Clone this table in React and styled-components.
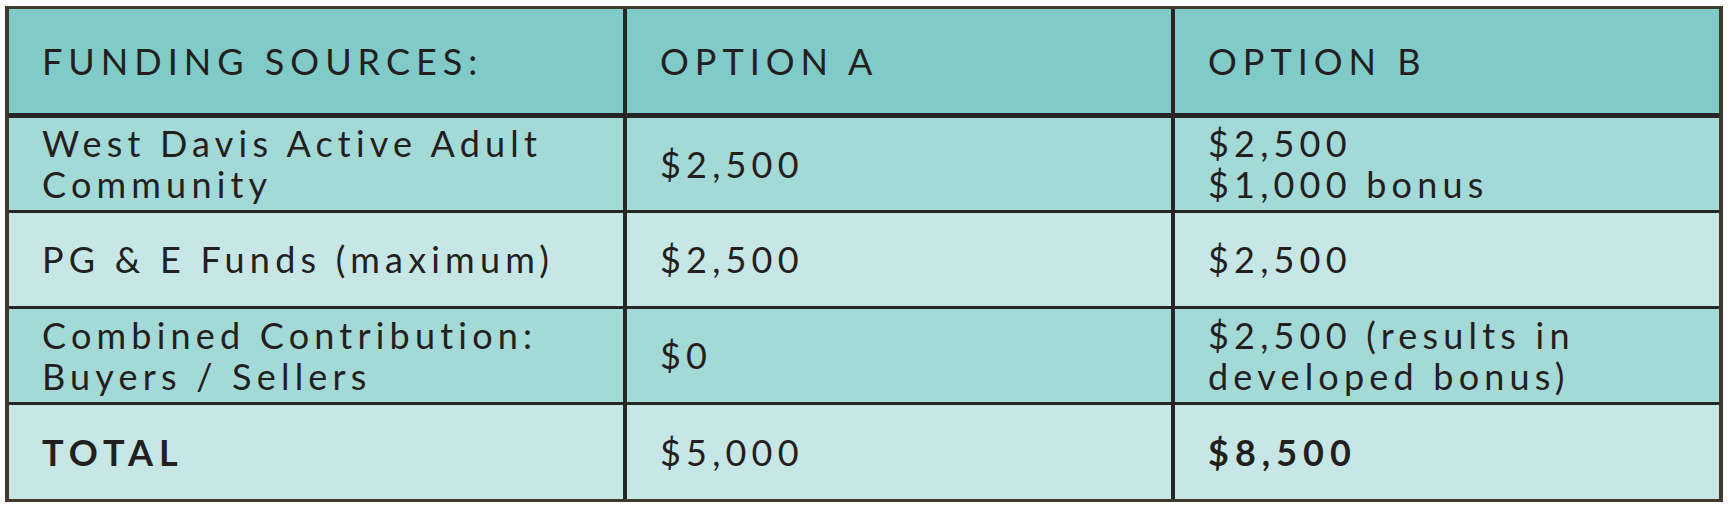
import * as React from 'react'
import styled, { createGlobalStyle } from 'styled-components'

const GlobalStyle = createGlobalStyle`
  html, body {
    margin: 0;
    padding: 0;
    background: #ffffff;
  }
  body {
    font-family: 'Lato', 'Liberation Sans', sans-serif;
    color: #231f20;
  }
`

const Frame = styled.div`
  margin: 6px 0 0 5px;
  width: max-content;
  display: grid;
  grid-template-columns: 614px 544px 544px;
  grid-template-rows: 106px 92px 93px 93px 94px;
  column-gap: 4px;
  row-gap: 3px;
  background: #262626;
  border-style: solid;
  border-color: #3e3b2d;
  border-width: 3px 4px 3px 4px;
`

const shades = {
  head: '#80cac7',
  dark: '#a3d9d7',
  light: '#c6e7e6',
}

const Cell = styled.div`
  display: flex;
  flex-direction: column;
  justify-content: center;
  padding: 0 10px 0 33px;
  background: ${(p) => shades[p.$tone]};
  font-size: 36px;
  line-height: 41px;
  letter-spacing: ${(p) => (p.$bold ? '6px' : '5.2px')};
  font-weight: ${(p) => (p.$bold ? 700 : 400)};
  white-space: nowrap;
  ${(p) =>
    p.$tone === 'head' &&
    `
    border-bottom: 2px solid #262626;
    text-transform: uppercase;
    letter-spacing: 6px;
  `}
`

const rows = [
  { tone: 'dark', cells: [['West Davis Active Adult', 'Community'], ['$2,500'], ['$2,500', '$1,000 bonus']] },
  { tone: 'light', cells: [['PG & E Funds (maximum)'], ['$2,500'], ['$2,500']] },
  { tone: 'dark', cells: [['Combined Contribution:', 'Buyers / Sellers'], ['$0'], ['$2,500 (results in', 'developed bonus)']] },
  { tone: 'light', cells: [['TOTAL'], ['$5,000'], ['$8,500']], bold: [true, false, true] },
]

export default function App() {
  return (
    <>
      <GlobalStyle />
      <Frame>
        <Cell $tone="head">FUNDING SOURCES:</Cell>
        <Cell $tone="head">OPTION A</Cell>
        <Cell $tone="head">OPTION B</Cell>
        {rows.map((row, r) =>
          row.cells.map((lines, c) => (
            <Cell key={`${r}-${c}`} $tone={row.tone} $bold={row.bold && row.bold[c]}>
              {lines.map((line) => (
                <span key={line}>{line}</span>
              ))}
            </Cell>
          ))
        )}
      </Frame>
    </>
  )
}
